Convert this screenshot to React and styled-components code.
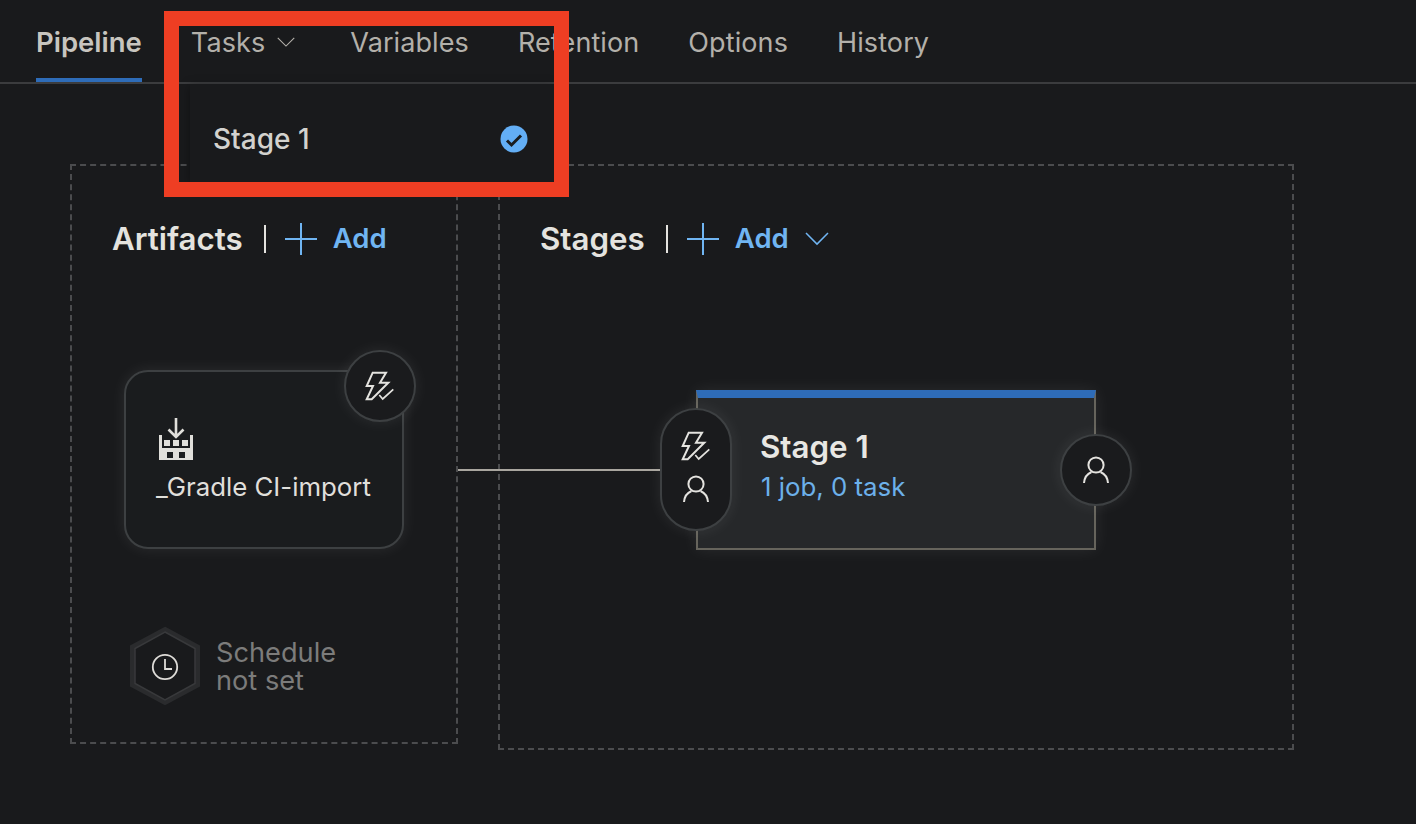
import React from 'react';
import styled, { createGlobalStyle } from 'styled-components';

const pageBg = '#191a1c';
const blue = '#70b5f2';
const ringColor = '#3d4042';
const glow = '0 0 16px rgba(255, 255, 255, 0.08)';

const GlobalStyle = createGlobalStyle`
    html, body {
        margin: 0;
        padding: 0;
        background: ${pageBg};
        font-family: Inter, "Noto Sans", sans-serif;
    }
`;

const Page = styled.div`
    position: relative;
    width: 1416px;
    height: 824px;
    overflow: hidden;
    background: ${pageBg};
`;

const TabBar = styled.nav`
    display: flex;
    align-items: center;
    gap: 49px;
    height: 84px;
    padding-left: 36px;
    box-sizing: border-box;
    border-bottom: 2px solid #3b3c3e;
`;

const Tab = styled.div`
    position: relative;
    display: flex;
    align-items: center;
    gap: 12px;
    box-sizing: border-box;
    height: 82px;
    padding-top: 2px;
    font-size: ${props => (props.active ? '27.5px' : '27px')};
    letter-spacing: ${props => (props.active ? '0' : '0.1px')};
    font-weight: ${props => (props.active ? 600 : 400)};
    color: ${props => (props.active ? '#c8c5bf' : '#b3b0aa')};
    margin-right: ${props => (props.menu ? '6px' : '0')};

    &::after {
        content: '';
        display: ${props => (props.active ? 'block' : 'none')};
        position: absolute;
        left: 0;
        right: 0;
        bottom: 0;
        height: 4px;
        background: #2e6cb8;
    }
`;

const Canvas = styled.main`
    display: flex;
    align-items: flex-start;
    gap: 40px;
    padding: 80px 0 0 70px;
`;

const Panel = styled.section`
    display: flex;
    flex-direction: column;
    align-items: flex-start;
    box-sizing: border-box;
    width: ${props => props.width}px;
    height: ${props => props.height}px;
    padding-top: 53px;
    border: 2px dashed #4b4c4e;
`;

const PanelHeader = styled.header`
    display: flex;
    align-items: center;
    height: 40px;
    padding-left: ${props => props.inset}px;
`;

const PanelTitle = styled.h2`
    margin: 0;
    font-size: 31.3px;
    font-weight: 600;
    color: #e4e3df;
`;

const HeaderRule = styled.span`
    width: 2px;
    height: 28px;
    margin: 0 19px 0 21px;
    background: #e4e3df;
`;

const AddButton = styled.div`
    display: flex;
    align-items: center;
    gap: 16px;
    font-size: 27.5px;
    font-weight: 600;
    color: ${blue};
`;

const AddLabel = styled.span`
    margin-top: -2px;
`;

const ArtifactCard = styled.div`
    position: relative;
    box-sizing: border-box;
    width: 280px;
    height: 179px;
    margin: 111px 0 0 52px;
    padding: 43px 0 0 26px;
    border: 2px solid ${ringColor};
    border-radius: 24px;
    background: #1a1c1e;
    box-shadow: ${glow};

    svg {
        display: block;
    }
`;

const ArtifactName = styled.div`
    margin: 6px 0 0 4px;
    font-size: 25.8px;
    line-height: 32px;
    white-space: nowrap;
    color: #e0dfdb;
`;

const RoundBadge = styled.div`
    position: absolute;
    top: ${props => props.top}px;
    right: ${props => props.right}px;
    display: flex;
    align-items: center;
    justify-content: center;
    box-sizing: border-box;
    width: 72px;
    height: 72px;
    border: 2px solid ${ringColor};
    border-radius: 50%;
    background: #1a1b1d;
    box-shadow: ${glow};
`;

const Schedule = styled.div`
    display: flex;
    align-items: center;
    gap: 11px;
    margin: 73px 0 0 53px;
    font-size: 27.2px;
    line-height: 28px;
    color: #7c7c7b;
`;

const ScheduleText = styled.div`
    padding-top: 2px;
`;

const StageCard = styled.div`
    position: relative;
    box-sizing: border-box;
    width: 400px;
    height: 160px;
    margin: 131px 0 0 196px;
    padding: 29px 0 0 62px;
    border: 2px solid #66645c;
    border-top: 8px solid #2e6cb8;
    background: #26282a;
    box-shadow: ${glow};

    &::before {
        content: '';
        position: absolute;
        top: 71px;
        right: 100%;
        width: 240px;
        height: 2px;
        background: #a9a69f;
    }
`;

const StageName = styled.div`
    font-size: 31.3px;
    font-weight: 600;
    line-height: 40px;
    color: #e8e7e3;
`;

const StageMeta = styled.div`
    font-size: 25.8px;
    line-height: 40px;
    color: #6cb0ea;
    padding-left: 1px;
`;

const ConditionPill = styled.div`
    position: absolute;
    top: 10px;
    left: -38px;
    display: flex;
    flex-direction: column;
    align-items: center;
    justify-content: center;
    gap: 3px;
    box-sizing: border-box;
    width: 72px;
    height: 123px;
    padding-bottom: 4px;
    border: 2px solid ${ringColor};
    border-radius: 36px;
    background: #1a1b1d;
    box-shadow: ${glow};
`;

const Menu = styled.div`
    position: absolute;
    top: 84px;
    left: 190px;
    display: flex;
    align-items: center;
    justify-content: space-between;
    box-sizing: border-box;
    width: 364px;
    height: 98px;
    padding: 12px 21px 0 23px;
    background: #191a1c;
    box-shadow: 0 2px 10px rgba(0, 0, 0, 0.35);
`;

const MenuLabel = styled.span`
    font-size: 28px;
    font-weight: 500;
    color: #d3d2ce;
`;

const Callout = styled.div`
    position: absolute;
    top: 11px;
    left: 164px;
    box-sizing: border-box;
    width: 405px;
    height: 186px;
    border: 15px solid #ee3e23;
    pointer-events: none;
`;

const Chevron = ({ size, color }) => (
    <svg width={size} height={size * 0.55} viewBox="0 0 24 13" fill="none" stroke={color} strokeWidth="1.5">
        <path d="M1 1 L12 12 L23 1" />
    </svg>
);

const Plus = () => (
    <svg width="32" height="32" viewBox="0 0 32 32" stroke={blue} strokeWidth="2">
        <path d="M16 0 V32 M0 16 H32" />
    </svg>
);

const BoltCheck = () => (
    <svg width="40" height="40" viewBox="0 0 40 40" fill="none" stroke="#e4e3df" strokeWidth="2">
        <path d="M12.7 6.7 H26 L20 16.7 H28.3 L11.7 33.3 H6.7 L13 20 H6.7 Z" />
        <path d="M19.3 29 L22.7 33 L33.3 23.3" strokeWidth="1.7" />
    </svg>
);

const User = () => (
    <svg width="40" height="40" viewBox="0 0 40 40" fill="none" stroke="#e4e3df" strokeWidth="2">
        <circle cx="20" cy="15" r="7.6" />
        <path d="M8 33 C8.5 27 12 23.5 15.5 22 M32 33 C31.5 27 28 23.5 24.5 22" />
    </svg>
);

const BuildIcon = () => (
    <svg width="48" height="50" viewBox="0 0 48 50">
        <path d="M24 3 V20 M16.5 14.5 L24 22 L31.5 14.5" fill="none" stroke="#e0dfdb" strokeWidth="2.6" />
        <path
            fill="#e0dfdb"
            fillRule="evenodd"
            d="M7 20 H10 V33 H38 V20 H41 V45 H7 Z M15 37 V43 H21 V37 Z M27 37 V43 H33 V37 Z"
        />
        <rect x="12" y="25" width="6" height="6" fill="#e0dfdb" />
        <rect x="21" y="25" width="6" height="6" fill="#e0dfdb" />
        <rect x="30" y="25" width="6" height="6" fill="#e0dfdb" />
    </svg>
);

const ClockHexagon = () => (
    <svg width="80" height="88" viewBox="0 0 80 88" fill="none">
        <polygon points="40,7.5 72.5,25 72.5,63 40,80.5 7.5,63 7.5,25" stroke="#2a2b2d" strokeWidth="5" />
        <polygon points="40,10 70,26.5 70,61.5 40,78 10,61.5 10,26.5" stroke="#38393b" strokeWidth="1.5" />
        <circle cx="40" cy="45" r="12.2" stroke="#dedcd8" strokeWidth="1.8" />
        <path d="M40 37 V47 H47" stroke="#dedcd8" strokeWidth="1.8" />
    </svg>
);

const CheckDot = () => (
    <svg width="38" height="38" viewBox="0 0 38 38" fill="none">
        <circle cx="19" cy="19" r="13.5" fill="#63aef5" />
        <path d="M12 20.5 L16.5 25 L26 15.5" stroke="#1a1c1e" strokeWidth="3" />
    </svg>
);

const tabs = ['Variables', 'Retention', 'Options', 'History'];

export default function App() {
    return (
        <Page>
            <GlobalStyle />
            <TabBar>
                <Tab active>Pipeline</Tab>
                <Tab menu>
                    Tasks
                    <Chevron size={18} color="#b3b0aa" />
                </Tab>
                {tabs.map(name => (
                    <Tab key={name}>{name}</Tab>
                ))}
            </TabBar>
            <Canvas>
                <Panel width={388} height={580}>
                    <PanelHeader inset={40}>
                        <PanelTitle>Artifacts</PanelTitle>
                        <HeaderRule />
                        <AddButton>
                            <Plus />
                            <AddLabel>Add</AddLabel>
                        </AddButton>
                    </PanelHeader>
                    <ArtifactCard>
                        <BuildIcon />
                        <ArtifactName>_Gradle CI-import</ArtifactName>
                        <RoundBadge top={-22} right={-14}>
                            <BoltCheck />
                        </RoundBadge>
                    </ArtifactCard>
                    <Schedule>
                        <ClockHexagon />
                        <ScheduleText>
                            Schedule
                            <br />
                            not set
                        </ScheduleText>
                    </Schedule>
                </Panel>
                <Panel width={796} height={586}>
                    <PanelHeader inset={40}>
                        <PanelTitle>Stages</PanelTitle>
                        <HeaderRule />
                        <AddButton>
                            <Plus />
                            <AddLabel>Add</AddLabel>
                            <Chevron size={24} color={blue} />
                        </AddButton>
                    </PanelHeader>
                    <StageCard>
                        <StageName>Stage 1</StageName>
                        <StageMeta>1 job, 0 task</StageMeta>
                        <ConditionPill>
                            <BoltCheck />
                            <User />
                        </ConditionPill>
                        <RoundBadge top={36} right={-38}>
                            <User />
                        </RoundBadge>
                    </StageCard>
                </Panel>
            </Canvas>
            <Menu>
                <MenuLabel>Stage 1</MenuLabel>
                <CheckDot />
            </Menu>
            <Callout />
        </Page>
    );
}
